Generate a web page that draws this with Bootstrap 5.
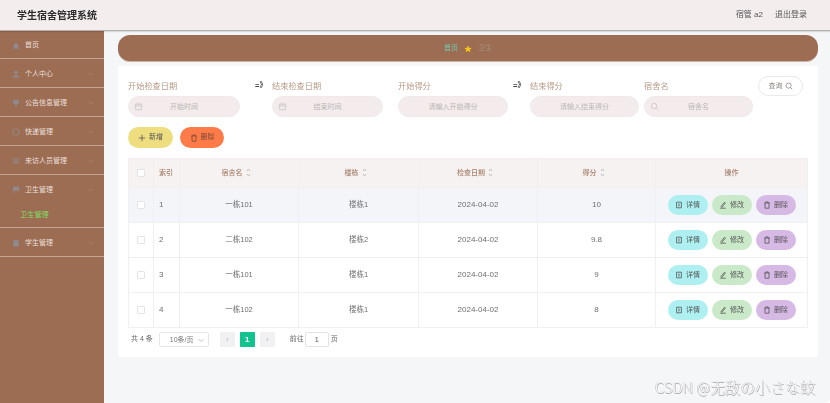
<!DOCTYPE html>
<html lang="zh-CN">
<head>
    <meta charset="UTF-8">
    <title>学生宿舍管理系统</title>
    <link href="https://cdn.jsdelivr.net/npm/bootstrap@5.3.0/dist/css/bootstrap.min.css" rel="stylesheet">
    <style>
        html, body { height: 100%; margin: 0; overflow: hidden; background: #fff; }
        body { font-family: "Liberation Sans", "Noto Sans CJK SC", sans-serif; font-size: 7px; color: #666; }
        .app-shell { width: 830px; height: 403px; position: relative; background: #f5f6f8; border-bottom-right-radius: 5px; overflow: hidden; filter: blur(.4px); }
        .top-bar { height: 31px; background: #f3edee; border-bottom: 1px solid #b4b1ac; box-shadow: 0 1px 1px rgba(0,0,0,.12); padding: 0 23px 0 17px; position: relative; z-index: 2; }
        .app-title { font-size: 10px; font-weight: 700; color: #2c2c2c; }
        .top-links { font-size: 8px; color: #555; gap: 12px; }
        .body-row { height: 372px; }
        .side-menu { width: 104px; background: #9c6d53; flex-shrink: 0; }
        .side-item { height: 29px; border-bottom: 1px solid #c4a594; padding: 2px 10px 0 12px; color: #eadfd9; gap: 5px; }
        .side-item:first-child { height: 28px; }
        .side-icon { width: 8px; height: 8px; fill: #8f8a90; flex-shrink: 0; }
        .side-item .chev { margin-left: auto; width: 6px; height: 6px; stroke: #b08c78; stroke-width: .8; fill: none; }
        .side-sub { height: 25px; border-bottom: 1px solid #c4a594; padding-left: 20px; color: #7fdc62; font-size: 7.2px; }
        .side-open { border-bottom: 0; height: 28px; }
        .main-area { width: 726px; padding: 4px 12px 0 14px; }
        .crumb-bar { height: 26px; background: #9c6d53; border-radius: 12px; gap: 6px; box-shadow: 0 1px 0 #c9b3a6; margin-bottom: 5px; font-size: 7px; padding-top: 1px; }
        .crumb-home { color: #6fc9b5; }
        .crumb-now { color: #a5917f; }
        .panel-box { background: #fff; height: 291px; padding: 11px 10px 0; }
        .filter-row { height: 41px; position: relative; }
        .field-box { flex-shrink: 0; }
        .field-label { font-size: 8.2px; line-height: 11px; height: 11px; margin: 4px 0 4px; color: #b89a87; }
        .pill-input { height: 21px; background: #f4ecec; border: 1px solid #efe9ea; border-radius: 11px; color: #bbb6b6; font-size: 7px; padding: 0 6px; position: relative; text-align: center; line-height: 19px; }
        .pill-input svg { position: absolute; left: 5px; top: 5px; width: 9px; height: 9px; stroke: #cfc9c9; fill: none; }
        .arrow-mark { font-size: 7.5px; font-weight: 700; color: #444; width: 9px; margin-top: 3px; line-height: 11px; white-space: nowrap; }
        .query-btn { width: 45px; height: 20px; border: 1px solid #eee8e6; border-radius: 10px; background: #fff; color: #8d8581; font-size: 7px; margin-top: -1px; padding: 0; gap: 2px; }
        .query-btn svg { width: 8px; height: 8px; stroke: #8d8581; fill: none; }
        .action-row { margin-top: 9px; gap: 7px; height: 21px; margin-bottom: 10px; }
        .pill-btn { height: 21px; border: 0; border-radius: 11px; font-size: 7px; color: #555; padding: 0; gap: 3px; }
        .add-btn { width: 45px; background: #efde80; }
        .del-btn { width: 44px; background: #fd7b49; color: #7b4a33; }
        .pill-btn svg, .row-btn svg { width: 8px; height: 8px; stroke: currentColor; fill: none; }
        .grid-table { width: 679px; table-layout: fixed; border-collapse: collapse; margin: 0; font-size: 7.5px; color: #6f6f6f; }
        .grid-table th, .grid-table td { border: 1px solid #f0eff3; text-align: center; vertical-align: middle; padding: 0; font-weight: 400; }
        .grid-table thead th { height: 29px; background: #f6f2f1; color: #a8806b; font-size: 7px; font-weight: 500; border-color: #f4eeec; }
        .grid-table tbody td { height: 35px; }
        .grid-table tbody tr:first-child td { background: #f3f5f9; }
        .grid-table .idx-cell { text-align: left; padding-left: 5px; }
        .grid-table .ascii-cell { font-size: 8px; }
        .sort-mark { display: inline-block; width: 5px; height: 9px; vertical-align: -2px; margin: 0 6px 0 3px; stroke: #c3bebb; fill: none; }
        .tick-box { display: inline-block; width: 8px; height: 8px; background: #fff; border: 1px solid #e4e4e8; border-radius: 1px; vertical-align: middle; }
        .row-btn { display: inline-flex; align-items: center; justify-content: center; gap: 3px; width: 40px; height: 20px; border-radius: 10px; color: #555; font-size: 7px; border: 0; padding: 0; margin-left: 4px; }
        .row-btn:first-child { margin-left: 0; }
        .view-btn { background: #aef0f2; }
        .edit-btn { background: #c9e9c9; }
        .drop-btn { background: #d7b9e6; }
        .pager-row { height: 26px; margin-top: -2px; font-size: 7px; color: #666; padding-left: 3px; }
        .size-pick { width: 50px; height: 15px; border: 1px solid #e6e6ea; border-radius: 2px; margin-left: 6px; padding-left: 10px; position: relative; line-height: 13px; color: #777; }
        .size-pick svg { position: absolute; right: 4px; top: 4px; width: 6px; height: 6px; stroke: #c4c4c8; fill: none; }
        .page-cell { width: 15px; height: 15px; border-radius: 1px; background: #f1f1f3; color: #b5b5b8; font-size: 8px; line-height: 15px; text-align: center; }
        .page-on { background: #12c28f; color: #fff; font-weight: 700; }
        .goto-box { width: 24px; height: 15px; border: 1px solid #e4e4e8; border-radius: 2px; text-align: center; line-height: 13px; margin: 0 2px 0 1px; font-size: 8px; }
        .mark-text { position: absolute; left: 655px; top: 378px; width: 170px; white-space: nowrap; font-size: 15px; line-height: 18px; color: #f8f8fa; text-shadow: .5px .5px 0 #aaa, -.5px -.5px 0 #bbb; font-family: "Noto Sans CJK JP", "Liberation Sans", sans-serif; font-weight: 300; }
        .filter-a { width: 112px; } .filter-gap-a { margin-left: 15px; margin-right: 8px; }
        .filter-b { width: 111px; } .filter-c { width: 110px; margin-left: 15px; }
        .filter-gap-b { margin-left: 5px; margin-right: 8px; } .filter-d { width: 109px; }
        .filter-e { width: 109px; margin-left: 5px; } .filter-f { margin-left: 5px; }
        .pager-first { margin-left: 11px; } .pager-mid { margin-left: 5px; } .pager-goto { margin-left: 15px; }
    </style>
</head>
<body>
<div class="app-shell">
    <div class="top-bar d-flex align-items-center justify-content-between">
        <div class="app-title">学生宿舍管理系统</div>
        <div class="top-links d-flex"><span>宿管 a2</span><span>退出登录</span></div>
    </div>
    <div class="body-row d-flex">
        <div class="side-menu" id="sideMenu"></div>
        <div class="main-area">
            <div class="crumb-bar d-flex align-items-center justify-content-center">
                <span class="crumb-home">首页</span>
                <svg width="8" height="8" viewBox="0 0 10 10"><path d="M5 .5l1.400 2.900 3.200.4-2.300 2.200.6 3.200L5 7.300 2.100 8.800l.6-3.200L.4 3.800l3.200-.4z" fill="#f5c518"/></svg>
                <span class="crumb-now">卫生</span>
            </div>
            <div class="panel-box">
                <div class="filter-row d-flex">
                    <div class="field-box filter-a">
                        <div class="field-label">开始检查日期</div>
                        <div class="pill-input"><svg viewBox="0 0 10 10"><path d="M1.500 2.500h7v6h-7zM1.500 4.500h7M3.500 1v2M6.500 1v2"/></svg>开始时间</div>
                    </div>
                    <div class="arrow-mark filter-gap-a">=》</div>
                    <div class="field-box filter-b">
                        <div class="field-label">结束检查日期</div>
                        <div class="pill-input"><svg viewBox="0 0 10 10"><path d="M1.500 2.500h7v6h-7zM1.500 4.500h7M3.500 1v2M6.500 1v2"/></svg>结束时间</div>
                    </div>
                    <div class="field-box filter-c">
                        <div class="field-label">开始得分</div>
                        <div class="pill-input">请输入开始得分</div>
                    </div>
                    <div class="arrow-mark filter-gap-b">=》</div>
                    <div class="field-box filter-d">
                        <div class="field-label">结束得分</div>
                        <div class="pill-input">请输入结束得分</div>
                    </div>
                    <div class="field-box filter-e">
                        <div class="field-label">宿舍名</div>
                        <div class="pill-input"><svg viewBox="0 0 10 10"><circle cx="4.500" cy="4.500" r="3"/><path d="M7 7l2 2"/></svg>宿舍名</div>
                    </div>
                    <button type="button" class="btn query-btn d-inline-flex align-items-center justify-content-center filter-f">查询<svg viewBox="0 0 10 10"><circle cx="4.500" cy="4.500" r="3.200"/><path d="M7 7l2 2"/></svg></button>
                </div>
                <div class="action-row d-flex">
                    <button type="button" class="btn pill-btn add-btn d-inline-flex align-items-center justify-content-center"><svg viewBox="0 0 10 10"><path d="M5 1v8M1 5h8"/></svg>新增</button>
                    <button type="button" class="btn pill-btn del-btn d-inline-flex align-items-center justify-content-center"><svg viewBox="0 0 10 10"><path d="M1.500 2.500h7M3.500 2.500V1.200h3v1.300M2.500 2.500v6.500h5v-6.500"/></svg>删除</button>
                </div>
                <table class="grid-table">
                    <colgroup><col style="width:25px"><col style="width:26px"><col style="width:119px"><col style="width:120px"><col style="width:119px"><col style="width:118px"><col style="width:152px"></colgroup>
                    <thead>
                        <tr>
                            <th><span class="tick-box"></span></th>
                            <th class="idx-cell">索引</th>
                            <th>宿舍名<svg class="sort-mark" viewBox="0 0 5 9"><path d="M1 3l1.500-2L4 3M1 6l1.500 2L4 6"/></svg></th>
                            <th>楼栋<svg class="sort-mark" viewBox="0 0 5 9"><path d="M1 3l1.500-2L4 3M1 6l1.500 2L4 6"/></svg></th>
                            <th>检查日期<svg class="sort-mark" viewBox="0 0 5 9"><path d="M1 3l1.500-2L4 3M1 6l1.500 2L4 6"/></svg></th>
                            <th>得分<svg class="sort-mark" viewBox="0 0 5 9"><path d="M1 3l1.500-2L4 3M1 6l1.500 2L4 6"/></svg></th>
                            <th>操作</th>
                        </tr>
                    </thead>
                    <tbody id="rows"></tbody>
                </table>
                <div class="pager-row d-flex align-items-center">
                    <span>共 4 条</span>
                    <div class="size-pick">10条/页<svg viewBox="0 0 6 6"><path d="M.5 2l2.500 2.500L5.500 2"/></svg></div>
                    <div class="page-cell pager-first">‹</div>
                    <div class="page-cell page-on pager-mid">1</div>
                    <div class="page-cell pager-mid">›</div>
                    <span class="pager-goto">前往</span>
                    <div class="goto-box">1</div>
                    <span>页</span>
                </div>
            </div>
        </div>
    </div>
</div>
<div class="mark-text">CSDN @无敌の小さな蚊</div>
<script src="https://cdn.jsdelivr.net/npm/bootstrap@5.3.0/dist/js/bootstrap.bundle.min.js"></script>
<script>
    const chevDown = '<svg class="chev" viewBox="0 0 8 8"><path d="M1 3l3 2.500L7 3"/></svg>';
    const chevUp = '<svg class="chev" viewBox="0 0 8 8"><path d="M1 5l3-2.500L7 5"/></svg>';
    const icons = {
        home: '<path d="M5 1L1 5h1.200v4h2V6.500h1.600V9h2V5H9z"/>',
        user: '<circle cx="5" cy="3" r="2.200"/><path d="M1 9.500c0-2.500 2-3.300 4-3.300s4 .8 4 3.300z"/>',
        board: '<path d="M1.500 1h7v5h-2.500v3.500H4V6H1.500z"/>',
        box: '<path fill-rule="evenodd" d="M5 .5a4.500 4.500 0 1 0 0 9 4.500 4.500 0 0 0 0-9zm0 1.200a3.300 3.300 0 1 1 0 6.600 3.300 3.300 0 0 1 0-6.600z"/>',
        lines: '<path d="M1 2h8v1.200H1zM1 4.400h8v1.200H1zM1 6.800h8V8H1z"/>',
        flag: '<path d="M1.500 1h7.500v5H2.700v3.500H1.500z"/>',
        clip: '<path d="M1.500 1.500h7V9.500h-7zM3.500.5h3v2h-3z"/>'
    };
    const menu = [
        ['首页', 'home', null], ['个人中心', 'user', chevDown], ['公告信息管理', 'board', chevDown],
        ['快递管理', 'box', chevDown], ['来访人员管理', 'lines', chevDown], ['卫生管理', 'flag', chevUp], ['学生管理', 'clip', chevDown]
    ];
    let menuHtml = '';
    menu.forEach(m => {
        let openItem = m[0] === '卫生管理';
        menuHtml += `<div class="side-item d-flex align-items-center ${openItem ? 'side-open' : ''}"><svg class="side-icon" viewBox="0 0 10 10">${icons[m[1]]}</svg><span>${m[0]}</span>${m[2] || ''}</div>`;
        if (openItem) menuHtml += '<div class="side-sub d-flex align-items-center">卫生管理</div>';
    });
    document.getElementById('sideMenu').innerHTML = menuHtml;

    const data = [
        [1, '一栋101', '楼栋1', '2024-04-02', '10'],
        [2, '二栋102', '楼栋2', '2024-04-02', '9.8'],
        [3, '一栋101', '楼栋1', '2024-04-02', '9'],
        [4, '一栋102', '楼栋1', '2024-04-02', '8']
    ];
    const viewIcon = '<svg viewBox="0 0 10 10"><path d="M2 1.500h6v7H2zM4 4h2M4 6h2"/></svg>';
    const editIcon = '<svg viewBox="0 0 10 10"><path d="M2.500 7l4.500-5.500 1 1L3.500 8zM1.500 9h7"/></svg>';
    const dropIcon = '<svg viewBox="0 0 10 10"><path d="M1.500 2.500h7M3.500 2.500V1.200h3v1.300M2.500 2.500v6.500h5v-6.500"/></svg>';
    document.getElementById('rows').innerHTML = data.map(r => `
        <tr>
            <td><span class="tick-box"></span></td>
            <td class="idx-cell ascii-cell">${r[0]}</td>
            <td>${r[1]}</td><td>${r[2]}</td><td class="ascii-cell">${r[3]}</td><td class="ascii-cell">${r[4]}</td>
            <td><button class="row-btn view-btn">${viewIcon}详情</button><button class="row-btn edit-btn">${editIcon}修改</button><button class="row-btn drop-btn">${dropIcon}删除</button></td>
        </tr>`).join('');
</script>
</body>
</html>
